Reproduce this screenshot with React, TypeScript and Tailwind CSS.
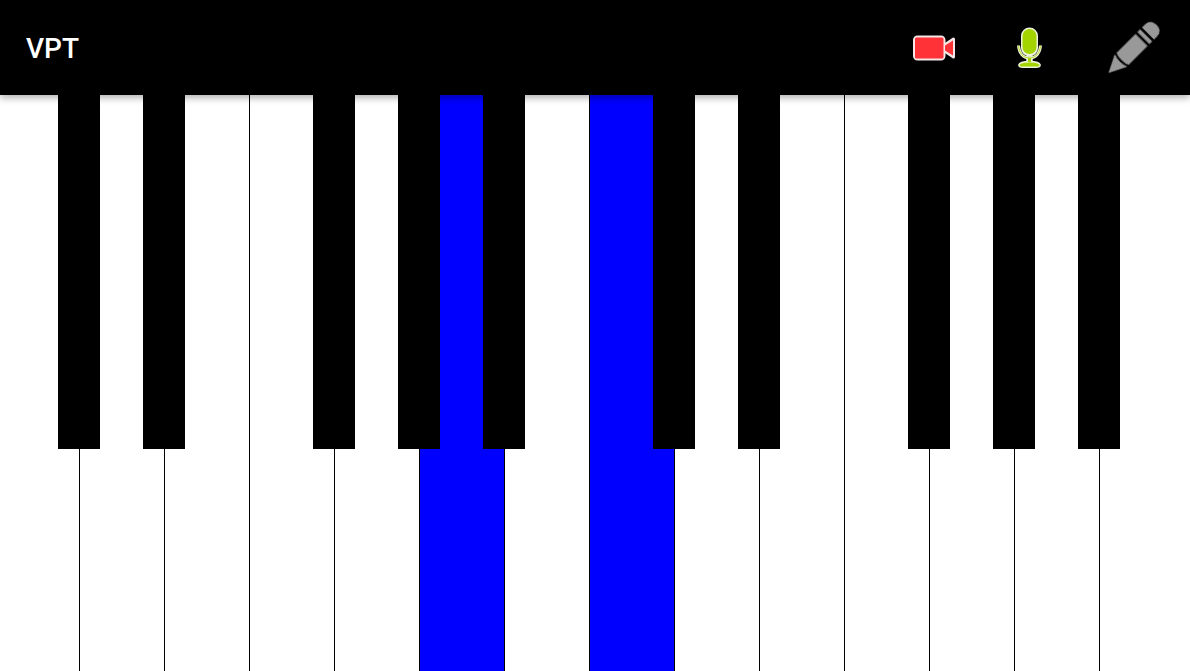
const whites = [0,0,0,0,0,1,0,1,0,0,0,0,0,0];
const blacks = [1,1,0,1,1,1,0,1,1,0,1,1,1];

function VideoIcon() {
  return (
    <svg width="46" height="30" viewBox="0 0 46 30" className="shrink-0">
      <defs>
        <filter id="b1" x="-20%" y="-20%" width="140%" height="140%"><feGaussianBlur stdDeviation="0.7" /></filter>
        <filter id="b1s" x="-20%" y="-20%" width="140%" height="140%"><feGaussianBlur stdDeviation="0.35" /></filter>
      </defs>
      <g filter="url(#b1)" fill="#f6e6e6" stroke="#f6e6e6" strokeWidth="3" strokeLinejoin="round">
        <rect x="3.5" y="4" width="29.5" height="22" rx="3" />
        <path d="M33.5 12 L42.5 6 V24 L33.5 18 Z" />
      </g>
      <g filter="url(#b1s)" fill="#ff3338">
        <rect x="4" y="4.5" width="28.5" height="21" rx="1.5" />
        <path d="M34 12.5 L42 7.5 V22.5 L34 17.5 Z" />
      </g>
    </svg>
  );
}

function MicIcon() {
  return (
    <svg width="31" height="45" viewBox="0 0 31 45" className="shrink-0">
      <defs>
        <filter id="b2" x="-20%" y="-20%" width="140%" height="140%"><feGaussianBlur stdDeviation="0.6" /></filter>
        <filter id="b2s" x="-20%" y="-20%" width="140%" height="140%"><feGaussianBlur stdDeviation="0.3" /></filter>
      </defs>
      <g filter="url(#b2)" stroke="#eef2d8" fill="#eef2d8">
        <rect x="8" y="3.5" width="15" height="27" rx="7.5" strokeWidth="2" />
        <path d="M4.5 20.5 C5 28 9 33 15.5 33 C22 33 26 28 26.5 20.5" fill="none" strokeWidth="3" />
        <rect x="13" y="32" width="5" height="5" strokeWidth="1.5" />
        <path d="M5 40 C6 35.5 25 35.5 26 40 C26 41.5 24 42 22 42 H9 C7 42 5 41.5 5 40 Z" strokeWidth="1.8" />
      </g>
      <g filter="url(#b2s)" fill="#a4d400">
        <rect x="8.5" y="4" width="14" height="25" rx="7" />
        <path d="M4.5 20.5 C5 28 9 33 15.5 33 C22 33 26 28 26.5 20.5" fill="none" stroke="#a4d400" strokeWidth="0.8" />
        <rect x="14" y="33" width="3" height="4" />
        <path d="M5.5 40 C6.5 36.5 24.5 36.5 25.5 40 C25.5 41 24 41.5 22 41.5 H9 C7 41.5 5.5 41 5.5 40 Z" />
      </g>
    </svg>
  );
}

function PencilIcon() {
  return (
    <svg width="56" height="56" viewBox="0 0 56 56" className="shrink-0">
      <defs>
        <filter id="b3" x="-10%" y="-10%" width="120%" height="120%"><feGaussianBlur stdDeviation="0.35" /></filter>
      </defs>
      <g transform="translate(2.5 53) rotate(-45)" filter="url(#b3)">
        <path d="M0 0 L17 -8.5 H60 Q68 -8.5 68 0 Q68 8.5 60 8.5 H17 Z" fill="#999999" />
        <path d="M19 -9.5 Q15.5 0 19 9.5" fill="none" stroke="#000" strokeWidth="2.4" />
        <path d="M48 -9.5 V9.5 M54.5 -9.5 V9.5" fill="none" stroke="#000" strokeWidth="2.8" />
      </g>
    </svg>
  );
}

export default function App() {
  return (
    <div className="relative flex h-[671px] w-[1190px] flex-col overflow-hidden bg-white font-['Roboto',sans-serif]">
      <header className="relative z-20 flex h-[95px] shrink-0 items-center bg-black pl-[26px] pr-[28px] shadow-[0_3px_7px_rgba(0,0,0,0.3)]">
        <span className="pt-[2px] text-[28px] font-medium leading-none text-white antialiased">VPT</span>
        <div className="ml-auto flex items-center">
          <VideoIcon />
          <div className="ml-[57px]"><MicIcon /></div>
          <div className="ml-[61px]"><PencilIcon /></div>
        </div>
      </header>
      <main className="relative flex-1">
        <div className="flex h-full">
          {whites.map((on, i) => (
            <div
              key={i}
              className={`h-full shrink-0 ${i === 0 ? "w-[80px]" : "w-[85px]"} ${i === whites.length - 1 ? "" : "border-r border-black"} ${on ? "bg-[#0000ff]" : "bg-white"}`}
            />
          ))}
        </div>
        <div className="absolute left-[58px] top-0 z-10 flex h-[354px] gap-[43px]">
          {blacks.map((on, i) => (
            <div key={i} className={`h-full w-[42px] shrink-0 ${on ? "bg-black" : "bg-transparent"}`} />
          ))}
        </div>
      </main>
    </div>
  );
}
